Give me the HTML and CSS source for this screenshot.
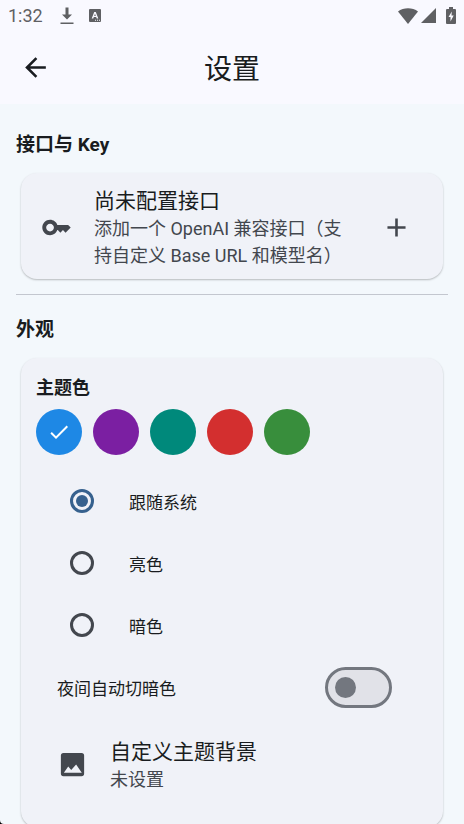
FILE: index.html
```html
<!DOCTYPE html>
<html lang="zh-CN">
<head>
<meta charset="utf-8">
<meta name="viewport" content="width=device-width, initial-scale=1">
<title>设置</title>
<link rel="stylesheet" href="styles.css">
</head>
<body>
<div class="app">
  <div class="status">
    <span class="clock">1:32</span>
    <svg class="status-download" viewBox="0 0 14 18" aria-hidden="true"><path d="M5.500 0.500h3v7h3.500L7 12.500 2 7.500h3.500zM.5 15.500h13v1.500H.5z"/></svg>
    <svg class="status-app" viewBox="0 0 12 13" aria-hidden="true"><rect width="12" height="13" rx="1"/><path class="cut" fill-rule="evenodd" d="M5.200 3h1.600L9.300 9.500H7.700L7.200 8H4.800L4.300 9.500H2.700zM6 4.700 5.200 6.900h1.600zM6 10.800h1v1H6zM8 10.800h1v1H8zM10 10.800h1v1h-1z"/></svg>
    <span class="status-space"></span>
    <svg class="status-wifi" viewBox="0 0 20 16" aria-hidden="true"><path d="M0 3.500C5.500-.8 14.500-.8 20 3.500L10 16z"/></svg>
    <svg class="status-signal" viewBox="0 0 15 15" aria-hidden="true"><path d="M15 0v15H0z"/></svg>
    <svg class="status-battery" viewBox="0 0 10 17" aria-hidden="true"><path d="M3 0h4v2h2q1 0 1 1v13q0 1-1 1H1q-1 0-1-1V3q0-1 1-1h2z"/><path class="cut" d="M5.800 4.500 2.500 10h2v4.500L7.700 8.500H5.500z"/></svg>
  </div>
  <header class="bar">
    <button class="icon-button" type="button" aria-label="返回"><svg class="icon" viewBox="0 0 24 24"><path d="M20 11H7.830l5.590-5.590L12 4l-8 8 8 8 1.410-1.410L7.830 13H20z"/></svg></button>
    <h1 class="title">设置</h1>
  </header>
  <main class="content">
    <h2 class="section-title">接口与 Key</h2>
    <section class="card api">
      <svg class="icon" viewBox="0 0 24 24" aria-hidden="true"><path fill-rule="evenodd" d="M21 10h-8.350C11.830 7.670 9.610 6 7 6c-3.310 0-6 2.690-6 6s2.690 6 6 6c2.610 0 4.830-1.670 5.650-4H13l2 2 2-2 2 2 4-4.040zM7 15c-1.650 0-3-1.350-3-3s1.350-3 3-3 3 1.350 3 3-1.350 3-3 3z"/></svg>
      <div class="item-text">
        <h3 class="item-title">尚未配置接口</h3>
        <p class="item-note">添加一个 OpenAI 兼容接口（支持自定义 Base URL 和模型名）</p>
      </div>
      <button class="icon-button" type="button" aria-label="添加接口"><svg class="icon" viewBox="0 0 24 24"><path d="M19 13h-6v6h-2v-6H5v-2h6V5h2v6h6z"/></svg></button>
    </section>
    <hr class="divider">
    <h2 class="section-title">外观</h2>
    <section class="card look">
      <h3 class="group-title">主题色</h3>
      <div class="swatches">
        <button class="swatch blue" type="button" aria-label="蓝色" aria-pressed="true"><svg class="check" viewBox="0 0 24 24"><path d="M9 16.170 4.830 12l-1.420 1.410L9 19 21 7l-1.410-1.410z"/></svg></button>
        <button class="swatch purple" type="button" aria-label="紫色"></button>
        <button class="swatch teal" type="button" aria-label="青色"></button>
        <button class="swatch red" type="button" aria-label="红色"></button>
        <button class="swatch green" type="button" aria-label="绿色"></button>
      </div>
      <label class="option"><input class="radio" type="radio" name="mode" checked><span>跟随系统</span></label>
      <label class="option"><input class="radio" type="radio" name="mode"><span>亮色</span></label>
      <label class="option"><input class="radio" type="radio" name="mode"><span>暗色</span></label>
      <label class="toggle"><span>夜间自动切暗色</span><input class="switch" type="checkbox" role="switch"></label>
      <div class="background">
        <svg class="icon" viewBox="0 0 24 24" aria-hidden="true"><path fill-rule="evenodd" d="M5 3h14q2 0 2 2v14q0 2-2 2H5q-2 0-2-2V5q0-2 2-2zM5.300 18.300h13.900L14.800 12 11 16.300 8.700 13.600z"/></svg>
        <div class="item-text">
          <h3 class="item-title">自定义主题背景</h3>
          <p class="item-note">未设置</p>
        </div>
      </div>
    </section>
  </main>
</div>
</body>
</html>
```
FILE: styles.css
```css
* {
  box-sizing: border-box;
}

html {
  background: #000;
}

body {
  margin: 0;
  color: #191c20;
  font-family: Roboto, "Noto Sans CJK SC", sans-serif;
}

h1, h2, h3, p {
  margin: 0;
  font-weight: 400;
}

button {
  padding: 0;
  border: 0;
  background: none;
  color: inherit;
}

svg {
  display: block;
  flex: none;
  fill: currentColor;
}

.app {
  display: flex;
  flex-direction: column;
  height: 100vh;
  overflow: hidden;
  border-bottom-left-radius: 4px;
  background: #f3f8fc;
}

.status {
  display: flex;
  align-items: center;
  flex: none;
  height: 31px;
  padding: 0 8px;
  background: #f9f9ff;
  color: #5f6063;
}

.clock {
  margin-right: 17px;
  font-size: 18px;
}

.cut {
  fill: #f9f9ff;
}

.status-download {
  width: 14px;
  height: 18px;
  margin-right: 15px;
}

.status-app {
  width: 12px;
  height: 13px;
}

.status-space {
  flex: 1;
}

.status-wifi {
  width: 20px;
  height: 16px;
  margin-right: 3px;
}

.status-signal {
  width: 15px;
  height: 15px;
  margin-right: 10px;
}

.status-battery {
  width: 10px;
  height: 17px;
}

.bar {
  display: grid;
  grid-template-columns: 32px 1fr 32px;
  align-items: center;
  flex: none;
  height: 73px;
  padding: 0 20px;
  background: #f9f9ff;
}

.title {
  padding-top: 4px;
  font-size: 28px;
  line-height: 40px;
  text-align: center;
}

.icon {
  width: 31px;
  height: 31px;
}

.content {
  flex: 1;
  min-height: 0;
  overflow-y: auto;
  scrollbar-width: none;
  padding: 27px 16px 16px;
}

.section-title {
  margin-bottom: 14px;
  font-size: 19px;
  font-weight: 700;
  line-height: 28px;
}

.card {
  margin: 0 5px;
  border-radius: 16px;
  background: #f0f2f8;
  box-shadow: 0 1px 2px rgba(0, 0, 0, 0.25);
}

.api {
  display: flex;
  align-items: center;
  gap: 22px;
  padding: 12px 31px 10px 20px;
  color: #43474e;
}

.item-text {
  flex: 1;
}

.item-title {
  padding-top: 2px;
  color: #191c20;
  font-size: 21px;
  line-height: 28px;
}

.item-note {
  color: #43474e;
  font-size: 18px;
  line-height: 27px;
}

.divider {
  height: 1px;
  margin: 15px 0 21px;
  border: 0;
  background: #c3c7cf;
}

.look {
  padding: 18px 15px 14px;
}

.group-title {
  margin-bottom: 9px;
  font-size: 18px;
  font-weight: 700;
  line-height: 24px;
}

.swatches {
  display: flex;
  gap: 11px;
  margin-bottom: 15px;
}

.swatch {
  display: grid;
  place-items: center;
  width: 46px;
  height: 46px;
  border-radius: 50%;
  color: #fff;
}

.check {
  width: 24px;
  height: 24px;
}

.blue { background: #1e88e5; }
.purple { background: #7b1fa2; }
.teal { background: #00897b; }
.red { background: #d32f2f; }
.green { background: #388e3c; }

.option,
.toggle {
  display: flex;
  align-items: center;
  height: 62px;
  font-size: 17px;
}

.option {
  gap: 35px;
  padding-left: 34px;
}

.toggle {
  justify-content: space-between;
  padding: 0 36px 0 21px;
}

.radio,
.switch {
  display: grid;
  align-items: center;
  margin: 0;
  appearance: none;
}

.radio {
  justify-items: center;
  width: 24px;
  height: 24px;
  border: 3px solid #43474e;
  border-radius: 50%;
}

.radio:checked {
  border-color: #36618e;
}

.radio:checked::before {
  width: 12px;
  height: 12px;
  border-radius: 50%;
  background: #36618e;
  content: "";
}

.switch {
  width: 67px;
  height: 41px;
  padding-left: 7px;
  border: 3px solid #73777f;
  border-radius: 21px;
  background: #e1e2e8;
}

.switch::before {
  width: 21px;
  height: 21px;
  border-radius: 50%;
  background: #73777f;
  content: "";
}

.switch:checked {
  justify-items: end;
  padding-right: 7px;
  border-color: #36618e;
  background: #36618e;
}

.switch:checked::before {
  background: #fff;
}

.background {
  display: flex;
  align-items: center;
  gap: 22px;
  padding: 18px 21px 20px;
  color: #43474e;
}
```
